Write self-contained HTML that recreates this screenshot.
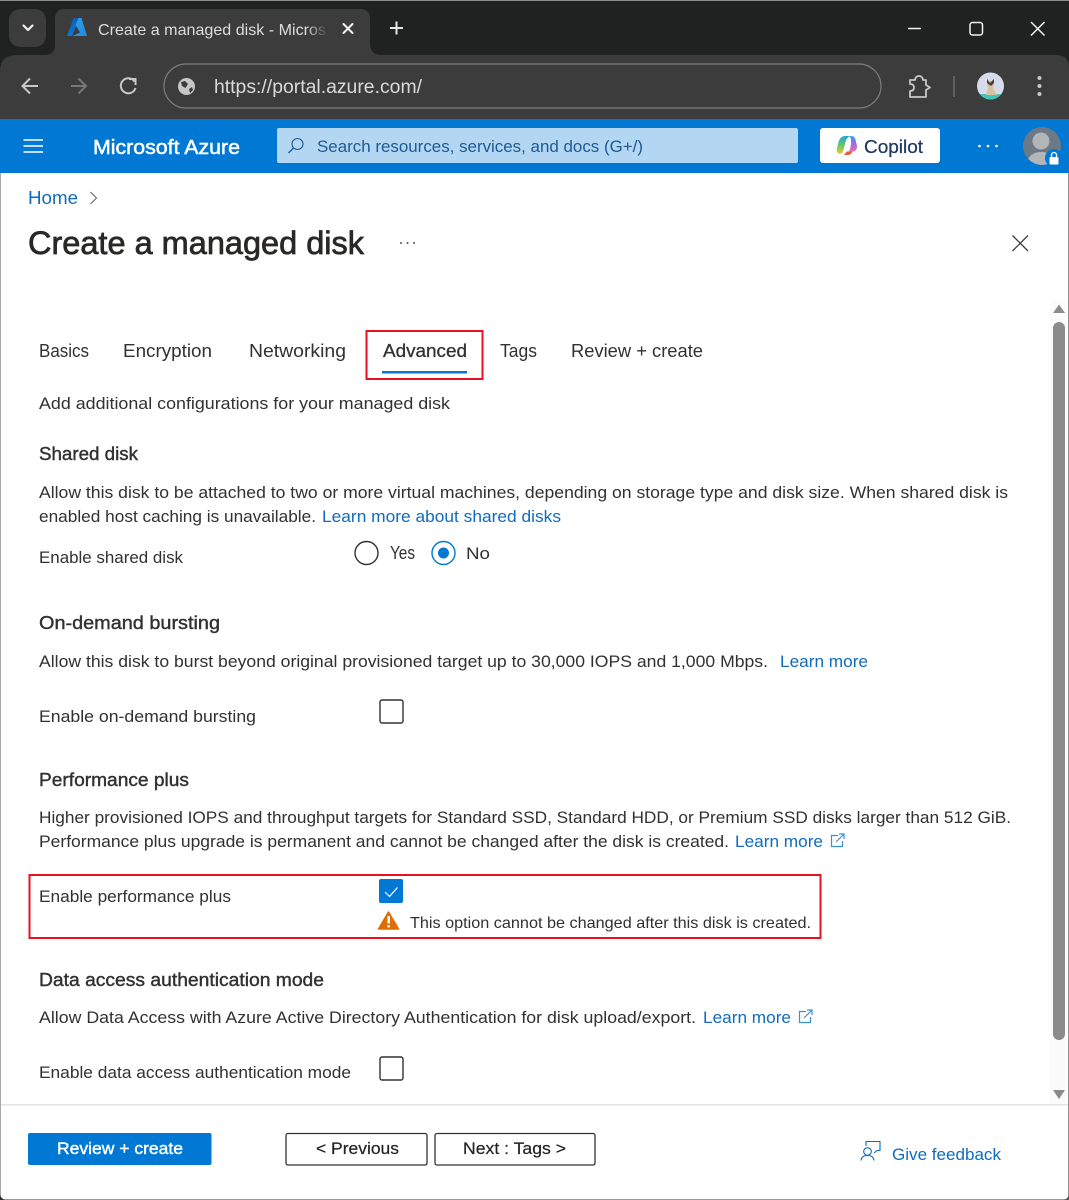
<!DOCTYPE html>
<html lang="en"><head><meta charset="utf-8"><title>Create a managed disk</title>
<style>
html,body{margin:0;padding:0;background:#fff;width:1069px;height:1200px;overflow:hidden}
svg{display:block}
text{font-family:"Liberation Sans",sans-serif;font-size:17px;fill:#323130}
.l{fill:#0f6cbd}
.s{stroke:#323130;stroke-width:.4;font-size:18px}
</style></head><body>
<svg width="1069" height="1200" viewBox="0 0 1069 1200" xmlns="http://www.w3.org/2000/svg">
<defs>
<linearGradient id="fade" x1="0" x2="1" y1="0" y2="0"><stop offset="0" stop-color="#3c3c3c" stop-opacity="0"/><stop offset="1" stop-color="#3c3c3c"/></linearGradient>
<linearGradient id="az1" x1="0" x2="0" y1="0" y2="1"><stop offset="0" stop-color="#0a5fb0"/><stop offset="1" stop-color="#0c78d8"/></linearGradient>
<linearGradient id="az2" x1="0" x2="1" y1="0" y2="1"><stop offset="0" stop-color="#2f9fe8"/><stop offset="1" stop-color="#1e8be0"/></linearGradient>
<linearGradient id="cpl" x1="0" x2="0" y1="0" y2="1"><stop offset="0" stop-color="#2a9fe8"/><stop offset=".45" stop-color="#58c76a"/><stop offset="1" stop-color="#f4c53c"/></linearGradient>
<linearGradient id="cpr" x1="0" x2="0" y1="0" y2="1"><stop offset="0" stop-color="#3f9cf0"/><stop offset=".5" stop-color="#a06ae6"/><stop offset="1" stop-color="#f26aa0"/></linearGradient>
<clipPath id="avc"><circle cx="1042" cy="146" r="19"/></clipPath>
<clipPath id="pc"><circle cx="990.500" cy="86" r="13.500"/></clipPath>
</defs>

<!-- Browser chrome -->
<rect x="0" y="0" width="1069" height="55" fill="#202221"/>
<rect x="0" y="0" width="1069" height="1" fill="#8a8a8a"/>
<rect x="0" y="55" width="1069" height="64" fill="#3c3c3c"/>
<path d="M0 55V72Q0 55 17 55ZM1069 55V68Q1069 55 1056 55Z" fill="#202221"/>
<rect x="9" y="9" width="37" height="38" rx="11" fill="#3c3c3c"/>
<path d="M23.500 25.500L28 30L32.500 25.500" fill="none" stroke="#f0f0f0" stroke-width="2.200" stroke-linecap="round" stroke-linejoin="round"/>
<path d="M44 55Q55 55 55 45V19Q55 9 65 9H360Q370 9 370 19V43Q370 55 382 55Z" fill="#3c3c3c"/>
<path d="M73.500 18H79.500L72 36H67Z" fill="url(#az1)"/>
<path d="M78.500 18H81.500L87 36H72.500L80 32.500L75.500 25Z" fill="url(#az2)"/>
<text x="98" y="35" textLength="228" lengthAdjust="spacingAndGlyphs" style="font-size:16px;fill:#dcdcdc">Create a managed disk - Micros</text>
<rect x="306" y="14" width="22" height="30" fill="url(#fade)"/>
<path d="M343.500 24L352.500 33M352.500 24L343.500 33" stroke="#f2f2f2" stroke-width="2" stroke-linecap="round"/>
<path d="M390 28H403M396.500 21.500V34.500" stroke="#e6e6e6" stroke-width="2"/>
<path d="M908 28.500H921" stroke="#f2f2f2" stroke-width="1.500"/>
<rect x="970" y="22.500" width="12.500" height="12.500" rx="2.500" fill="none" stroke="#f2f2f2" stroke-width="1.500"/>
<path d="M1031 22L1044.500 35.500M1044.500 22L1031 35.500" stroke="#f2f2f2" stroke-width="1.500"/>

<path d="M38 86H23M30 78.500L22.500 86L30 93.500" fill="none" stroke="#c7c7c7" stroke-width="2"/>
<path d="M71 86H86M78.500 78.500L86 86L78.500 93.500" fill="none" stroke="#767676" stroke-width="2"/>
<path d="M134.500 81.500A7.500 7.500 0 1 0 135.500 88" fill="none" stroke="#c7c7c7" stroke-width="2"/>
<path d="M129 79H135.500V85" fill="none" stroke="#c7c7c7" stroke-width="2"/>
<rect x="164" y="64" width="717" height="44" rx="22" fill="#3c3c3c" stroke="#7b7b7b" stroke-width="1.200"/>
<circle cx="186.500" cy="86.500" r="8.500" fill="#c7c7c7"/>
<path d="M181 82L185 81L188 84L185.500 88L182 86ZM189 89L192 87L193 90L190 93Z" fill="#3c3c3c"/>
<text x="214" y="93" textLength="208" lengthAdjust="spacingAndGlyphs" style="font-size:19px;fill:#dadada">https://portal.azure.com/</text>
<path d="M910 80H915Q915.500 76 919 76T923 80H926V85L930 87.500L926 90V97H910V91Q914 91 914 87.500T910 84Z" fill="none" stroke="#c7c7c7" stroke-width="1.800" stroke-linejoin="round"/>
<rect x="953" y="76" width="2" height="21" fill="#5f5f5f"/>
<circle cx="990.500" cy="86" r="13.500" fill="#d6dceb"/>
<g clip-path="url(#pc)"><rect x="976" y="94" width="29" height="6" fill="#3fc6b8"/>
<path d="M987 78L989 81H992L994 78L994 85L993 88L997 95H986L988 88L987 85Z" fill="#d8c3a0"/>
<path d="M987 79L990 83L994 79V83L991 86L987 83Z" fill="#4a4038"/></g>
<circle cx="1039.500" cy="78" r="2" fill="#c7c7c7"/><circle cx="1039.500" cy="86" r="2" fill="#c7c7c7"/><circle cx="1039.500" cy="94" r="2" fill="#c7c7c7"/>

<!-- Azure header -->
<rect x="0" y="119" width="1069" height="54" fill="#0078d4"/>
<path d="M23.500 140H43M23.500 146H43M23.500 152H43" stroke="#fff" stroke-width="1.500"/>
<text x="93" y="154" textLength="147" lengthAdjust="spacingAndGlyphs" style="font-size:20px;fill:#fff;stroke:#fff;stroke-width:.5">Microsoft Azure</text>
<rect x="277" y="128" width="521" height="35" rx="2" fill="#b3d6f2"/>
<circle cx="297.500" cy="144" r="5.500" fill="none" stroke="#1d5a94" stroke-width="1.100"/>
<path d="M293.500 148L288.500 153" stroke="#1d5a94" stroke-width="1.300"/>
<text x="317" y="152" textLength="326" lengthAdjust="spacingAndGlyphs" style="font-size:17px;fill:#1d5a94">Search resources, services, and docs (G+/)</text>
<rect x="820" y="128" width="120" height="35" rx="3" fill="#fff"/>
<path d="M841 137.500Q843 136 845 136H850Q846.500 138 845.500 142L843.500 150Q842.500 154 839.500 154Q836 153 837 148L838.500 142Q839.500 139 841 137.500Z" fill="url(#cpl)"/>
<path d="M849.500 136H851Q854.500 136 855.500 139.500L857 146Q857.500 151 852.500 151.500H849Q851 147 851 143Q851.500 139 849.500 136Z" fill="url(#cpr)"/>
<path d="M843.500 155H848Q851 155 852.500 151.500H846.500Q845.500 154 843.500 155Z" fill="#ee5a3c"/>
<text x="864" y="153" textLength="59" lengthAdjust="spacingAndGlyphs" style="font-size:18px;fill:#1f3864;stroke:#1f3864;stroke-width:.25">Copilot</text>
<circle cx="979.500" cy="146" r="1.300" fill="#fff"/><circle cx="988" cy="146" r="1.300" fill="#fff"/><circle cx="996.500" cy="146" r="1.300" fill="#fff"/>
<circle cx="1042" cy="146" r="19" fill="#6d7a86"/>
<g clip-path="url(#avc)"><circle cx="1041" cy="141" r="8.500" fill="#b3b6b9"/><ellipse cx="1041" cy="161" rx="13" ry="9" fill="#b3b6b9"/></g>
<circle cx="1054" cy="158" r="9" fill="#0078d4"/>
<rect x="1049.500" y="157" width="9" height="7.500" rx="1" fill="#fff"/>
<path d="M1051.500 157V155A2.500 2.500 0 0 1 1056.500 155V157" fill="none" stroke="#fff" stroke-width="1.300"/>

<!-- Breadcrumb and title -->
<text class="l" x="28" y="204" textLength="50" lengthAdjust="spacingAndGlyphs" style="font-size:18px">Home</text>
<path d="M90.500 192L96.500 198L90.500 204" fill="none" stroke="#605e5c" stroke-width="1"/>
<text x="28" y="254" textLength="336" lengthAdjust="spacingAndGlyphs" style="font-size:32px;fill:#292827;stroke:#292827;stroke-width:.7">Create a managed disk</text>
<circle cx="401" cy="243" r="1" fill="#555"/><circle cx="407.500" cy="243" r="1" fill="#555"/><circle cx="414" cy="243" r="1" fill="#555"/>
<path d="M1012.500 235.500L1028 251M1028 235.500L1012.500 251" stroke="#3a3a3a" stroke-width="1.300"/>

<!-- Tabs -->
<text x="39" y="357" textLength="50" lengthAdjust="spacingAndGlyphs" style="font-size:18px">Basics</text>
<text x="123" y="357" textLength="89" lengthAdjust="spacingAndGlyphs" style="font-size:18px">Encryption</text>
<text x="249" y="357" textLength="97" lengthAdjust="spacingAndGlyphs" style="font-size:18px">Networking</text>
<text x="383" y="357" textLength="84" lengthAdjust="spacingAndGlyphs" style="font-size:18px;stroke:#323130;stroke-width:.3">Advanced</text>
<text x="500" y="357" textLength="37" lengthAdjust="spacingAndGlyphs" style="font-size:18px">Tags</text>
<text x="571" y="357" textLength="132" lengthAdjust="spacingAndGlyphs" style="font-size:18px">Review + create</text>
<rect x="382" y="371" width="85" height="2.500" fill="#0078d4"/>
<rect x="366.500" y="331" width="116" height="48" fill="none" stroke="#e81123" stroke-width="2"/>

<text x="39" y="409" textLength="411" lengthAdjust="spacingAndGlyphs">Add additional configurations for your managed disk</text>

<!-- Shared disk -->
<text class="s" x="39" y="460" textLength="99" lengthAdjust="spacingAndGlyphs">Shared disk</text>
<text x="39" y="498" textLength="969" lengthAdjust="spacingAndGlyphs">Allow this disk to be attached to two or more virtual machines, depending on storage type and disk size. When shared disk is</text>
<text x="39" y="522" textLength="277" lengthAdjust="spacingAndGlyphs">enabled host caching is unavailable.</text>
<text class="l" x="322" y="522" textLength="239" lengthAdjust="spacingAndGlyphs">Learn more about shared disks</text>
<text x="39" y="563" textLength="144" lengthAdjust="spacingAndGlyphs">Enable shared disk</text>
<circle cx="366.500" cy="553" r="11.500" fill="#fff" stroke="#323130" stroke-width="1.400"/>
<text x="390" y="559" textLength="25" lengthAdjust="spacingAndGlyphs" style="font-size:18px">Yes</text>
<circle cx="443.500" cy="553" r="11.500" fill="#fff" stroke="#0078d4" stroke-width="1.400"/>
<circle cx="443.500" cy="553" r="5.500" fill="#0078d4"/>
<text x="466" y="559" textLength="24" lengthAdjust="spacingAndGlyphs">No</text>

<!-- On-demand bursting -->
<text class="s" x="39" y="629" textLength="181" lengthAdjust="spacingAndGlyphs">On-demand bursting</text>
<text x="39" y="667" textLength="729" lengthAdjust="spacingAndGlyphs">Allow this disk to burst beyond original provisioned target up to 30,000 IOPS and 1,000 Mbps.</text>
<text class="l" x="780" y="667" textLength="88" lengthAdjust="spacingAndGlyphs">Learn more</text>
<text x="39" y="722" textLength="217" lengthAdjust="spacingAndGlyphs">Enable on-demand bursting</text>
<rect x="380" y="700" width="23" height="23" rx="2" fill="#fff" stroke="#323130" stroke-width="1.400"/>

<!-- Performance plus -->
<text class="s" x="39" y="786" textLength="150" lengthAdjust="spacingAndGlyphs">Performance plus</text>
<text x="39" y="823" textLength="972" lengthAdjust="spacingAndGlyphs">Higher provisioned IOPS and throughput targets for Standard SSD, Standard HDD, or Premium SSD disks larger than 512 GiB.</text>
<text x="39" y="847" textLength="690" lengthAdjust="spacingAndGlyphs">Performance plus upgrade is permanent and cannot be changed after the disk is created.</text>
<text class="l" x="735" y="847" textLength="88" lengthAdjust="spacingAndGlyphs">Learn more</text>
<g fill="none" stroke="#3b8fd6" stroke-width="1.200"><path d="M838 835.500H831.500V846.500H842.500V841"/><path d="M836 842L843.500 834.500M839 834H844V839"/></g>

<rect x="29.500" y="875" width="791" height="63" fill="none" stroke="#e81123" stroke-width="2"/>
<text x="39" y="902" textLength="192" lengthAdjust="spacingAndGlyphs">Enable performance plus</text>
<rect x="379" y="879" width="24" height="24" rx="2" fill="#0078d4"/>
<path d="M385 892L389.500 896.500L397.500 887.500" fill="none" stroke="#fff" stroke-width="1.200"/>
<path d="M388.500 912L398.500 929H378.500Z" fill="#dd6f00" stroke="#dd6f00" stroke-width="1.500" stroke-linejoin="round"/>
<rect x="387.500" y="916" width="2.400" height="7.500" fill="#fff"/><rect x="387.500" y="925" width="2.400" height="2.400" fill="#fff"/>
<text x="410" y="928" textLength="401" lengthAdjust="spacingAndGlyphs" style="font-size:16px">This option cannot be changed after this disk is created.</text>

<!-- Data access -->
<text class="s" x="39" y="986" textLength="285" lengthAdjust="spacingAndGlyphs">Data access authentication mode</text>
<text x="39" y="1023" textLength="657" lengthAdjust="spacingAndGlyphs">Allow Data Access with Azure Active Directory Authentication for disk upload/export.</text>
<text class="l" x="703" y="1023" textLength="88" lengthAdjust="spacingAndGlyphs">Learn more</text>
<g fill="none" stroke="#3b8fd6" stroke-width="1.200"><path d="M806 1011.500H799.500V1022.500H810.500V1017"/><path d="M804 1018L811.500 1010.500M807 1010H812V1015"/></g>
<text x="39" y="1078" textLength="312" lengthAdjust="spacingAndGlyphs">Enable data access authentication mode</text>
<rect x="380" y="1057" width="23" height="23" rx="2" fill="#fff" stroke="#323130" stroke-width="1.400"/>

<!-- Scrollbar -->
<rect x="1050" y="300" width="17" height="805" fill="#fbfbfb"/>
<path d="M1059 304.500L1065 313H1053Z" fill="#8b8b8b"/>
<rect x="1053" y="322" width="12" height="718" rx="6" fill="#8b8b8b"/>
<path d="M1059 1099L1065 1090H1053Z" fill="#8b8b8b"/>

<!-- Footer -->
<rect x="0" y="1104" width="1069" height="1.500" fill="#e3e3e3"/>
<rect x="28" y="1133" width="183.500" height="32" rx="2" fill="#0078d4"/>
<text x="57" y="1154" textLength="126" lengthAdjust="spacingAndGlyphs" style="font-size:17px;fill:#fff;stroke:#fff;stroke-width:.4">Review + create</text>
<rect x="286" y="1133.500" width="141" height="31.500" rx="2" fill="#fff" stroke="#323130" stroke-width="1.300"/>
<text x="316" y="1154" textLength="83" lengthAdjust="spacingAndGlyphs" style="font-size:17px;fill:#222;stroke:#222;stroke-width:.2">&lt; Previous</text>
<rect x="435" y="1133.500" width="160" height="31.500" rx="2" fill="#fff" stroke="#323130" stroke-width="1.300"/>
<text x="463" y="1154" textLength="103" lengthAdjust="spacingAndGlyphs" style="font-size:17px;fill:#222;stroke:#222;stroke-width:.2">Next : Tags &gt;</text>
<g fill="none" stroke="#0f6cbd" stroke-width="1.100"><path d="M866 1146V1141.500H880V1150.500H877L874 1153"/><circle cx="867.500" cy="1151.500" r="3.800"/><path d="M861 1160.500Q861.500 1155.500 867.500 1155.500T874 1160.500"/></g>
<text class="l" x="892" y="1160" textLength="109" lengthAdjust="spacingAndGlyphs">Give feedback</text>

<!-- Window frame -->
<rect x="0" y="173" width="1" height="1027" fill="#a8a8a8"/>
<rect x="1068" y="173" width="1" height="1027" fill="#8f8f8f"/>
<rect x="0" y="1199" width="1069" height="1" fill="#9a9a9a"/>
<path d="M0 1200V1195L1 1197L3 1199L5 1200Z" fill="#333"/>
<path d="M1069 1200V1195L1068 1197L1066 1199L1064 1200Z" fill="#555"/>
</svg>
</body></html>
